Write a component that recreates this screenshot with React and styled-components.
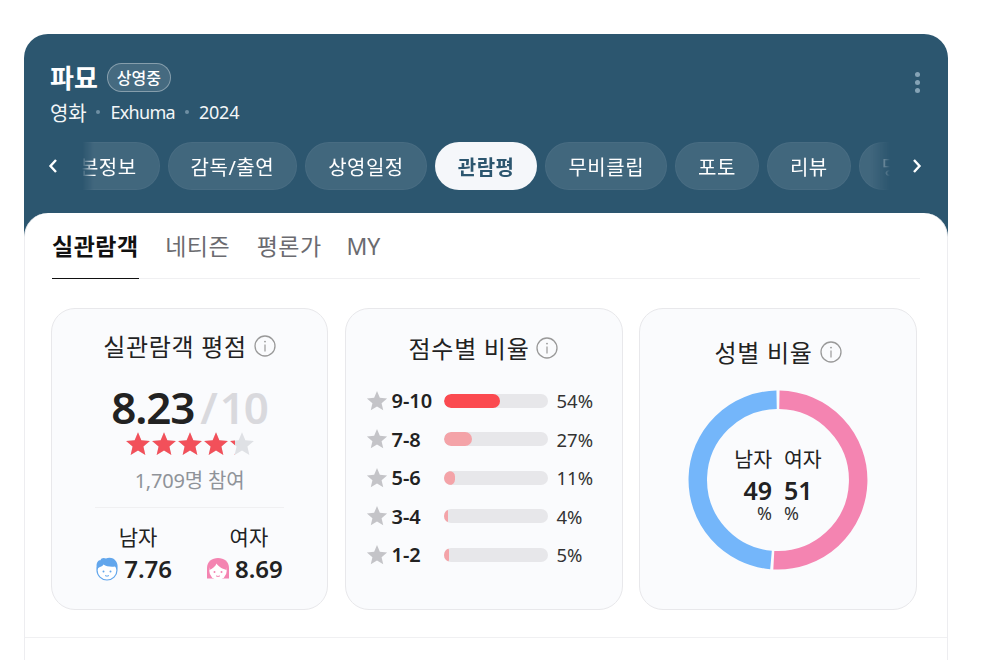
import React from 'react';
import styled, { createGlobalStyle } from 'styled-components';

const GlobalStyle = createGlobalStyle`
    html, body {
        margin: 0;
        padding: 0;
        background: #fff;
        height: 660px;
        overflow: hidden;
        font-family: "Noto Sans", "Noto Sans CJK KR", sans-serif;
        color: #222;
    }
`

const Page = styled.div`
    padding: 34px 42px 0 24px;
`

const Card = styled.div`
    border-radius: 24px 24px 0 0;
    background: #2c566f;
    overflow: hidden;
    height: 640px;
`

const Header = styled.header`
    padding: 26px 26px 0 26px;
    position: relative;
`

const TitleRow = styled.div`
    display: flex;
    align-items: center;
    gap: 9px;
    height: 34px;
`

const Title = styled.h1`
    margin: 0;
    font-size: 26px;
    font-weight: 700;
    color: #fff;
`

const Badge = styled.span`
    display: inline-flex;
    align-items: center;
    box-sizing: border-box;
    height: 29px;
    padding: 0 9px;
    border: 1px solid rgba(255,255,255,.35);
    border-radius: 15px;
    background: rgba(255,255,255,.12);
    font-size: 16px;
    font-weight: 500;
    color: #fff;
`

const SubRow = styled.div`
    display: flex;
    align-items: center;
    gap: 10px;
    margin-top: 2px;
    height: 32px;
    font-size: 18px;
    letter-spacing: -.2px;
    color: #f3f6f8;
`

const KindText = styled.span`
    font-size: 20px;
`

const TitleEn = styled.span`
    letter-spacing: -.7px;
`

const Dot = styled.i`
    width: 4px;
    height: 4px;
    border-radius: 50%;
    background: #6f8fa3;
`

const MoreDots = styled.button`
    position: absolute;
    top: 38px;
    right: 28px;
    display: flex;
    flex-direction: column;
    gap: 3px;
    padding: 0;
    border: 0;
    background: none;
    i {
        width: 5px;
        height: 5px;
        border-radius: 50%;
        background: #85a3b6;
    }
`

const TabRow = styled.div`
    display: flex;
    align-items: center;
    margin: 14px 0 0 -13px;
    height: 48px;
`

const Arrow = styled.button`
    flex: none;
    width: 32px;
    height: 32px;
    display: flex;
    align-items: center;
    justify-content: center;
    padding: 0;
    border: 0;
    background: none;
    color: #fff;
`

const Strip = styled.div`
    flex: none;
    width: 808px;
    margin: 0 11px 0 13px;
    overflow: hidden;
    -webkit-mask-image: linear-gradient(90deg, transparent 0, #000 12px, #000 788px, transparent 808px);
    mask-image: linear-gradient(90deg, transparent 0, #000 12px, #000 788px, transparent 808px);
`

const StripInner = styled.div`
    display: flex;
    gap: 8px;
    margin-left: -44px;
`

const Pill = styled.div`
    flex: none;
    box-sizing: border-box;
    height: 48px;
    padding: 0 22px;
    display: flex;
    align-items: center;
    border-radius: 24px;
    border: 1px solid ${p => p.$active ? 'transparent' : 'rgba(255,255,255,.04)'};
    background: ${p => p.$active ? '#f5f7fa' : 'rgba(255,255,255,.1)'};
    color: ${p => p.$active ? '#2c566f' : '#fff'};
    font-size: 20px;
    letter-spacing: .5px;
    font-weight: ${p => p.$active ? 700 : 400};
    white-space: nowrap;
`

const Body = styled.main`
    margin-top: 23px;
    background: #fff;
    border: 1px solid #ededf0;
    border-width: 0 1px;
    border-radius: 24px 24px 0 0;
    height: 460px;
    padding-left: 27px;
    padding-right: 27px;
`

const SubTabs = styled.nav`
    display: flex;
    gap: 26.5px;
    height: 65px;
    border-bottom: 1px solid #f0f0f2;
`

const SubTab = styled.div`
    box-sizing: border-box;
    height: 66px;
    padding-top: 16px;
    margin-left: ${p => p.$latin ? '-1.5px' : 0};
    font-size: 23px;
    letter-spacing: ${p => p.$latin ? '-.3px' : '.5px'};
    line-height: 34px;
    font-weight: ${p => p.$active ? 700 : 400};
    color: ${p => p.$active ? '#111' : '#6b6b70'};
    border-bottom: 1px solid ${p => p.$active ? '#111' : 'transparent'};
`

const Cards = styled.div`
    display: grid;
    grid-template-columns: 277px 278px 278px;
    column-gap: 16.5px;
    margin: 29px 0 0 -1px;
`

const Panel = styled.section`
    box-sizing: border-box;
    height: 302px;
    border: 1px solid #e8e8eb;
    border-radius: 24px;
    background: #fafbfd;
    padding-top: ${p => p.$top}px;
`

const PanelTitle = styled.h2`
    margin: 0;
    display: flex;
    justify-content: center;
    align-items: center;
    gap: 7px;
    height: 32px;
    font-size: 24px;
    letter-spacing: .7px;
    font-weight: 400;
    color: #222;
`

const InfoSvg = styled.svg`
    margin-top: 2px;
`

const Score = styled.div`
    display: flex;
    justify-content: center;
    align-items: baseline;
    margin-top: 21px;
    height: 49px;
    line-height: 50px;
    font-size: 44px;
    font-weight: 600;
    letter-spacing: -1.2px;
`

const ScoreMax = styled.span`
    color: #d9d9dd;
    margin-left: 6px;
    word-spacing: -7px;
`

const Stars = styled.div`
    position: relative;
    width: 130px;
    height: 26px;
    margin: 0 auto;
`

const StarLayer = styled.div`
    position: absolute;
    left: 0;
    top: 0;
    display: flex;
    overflow: hidden;
    color: ${p => p.$color};
`

const Count = styled.div`
    text-align: center;
    margin-top: 10px;
    font-size: 20px;
    letter-spacing: -.2px;
    line-height: 28px;
    color: #8f9399;
`

const Divider = styled.div`
    height: 1px;
    margin: 12px 43px 0;
    background: #f0f0f2;
`

const Genders = styled.div`
    display: flex;
    justify-content: center;
    gap: 35px;
    margin-top: 14px;
`

const Gender = styled.div`
    display: flex;
    flex-direction: column;
    align-items: center;
`

const GenderLabel = styled.span`
    margin-left: 8px;
    font-size: 21px;
    line-height: 30px;
`

const GenderScore = styled.div`
    display: flex;
    align-items: center;
    gap: 6px;
    margin-top: 1px;
    font-size: 24px;
    line-height: 32px;
    font-weight: 600;
`

const Rows = styled.div`
    display: flex;
    flex-direction: column;
    gap: 12.5px;
    margin: 24.5px 0 0 20px;
`

const Row = styled.div`
    display: flex;
    align-items: center;
    height: 26px;
`

const RowStar = styled.span`
    display: flex;
    color: #c4c4c8;
`

const RowLabel = styled.span`
    width: 52px;
    margin-left: 4px;
    font-size: 20px;
    font-weight: 600;
`

const Track = styled.div`
    width: 104px;
    height: 14px;
    border-radius: 7px;
    background: #e7e7ea;
    overflow: hidden;
`

const Fill = styled.div`
    height: 100%;
    border-radius: 7px;
    background: ${p => p.$top ? '#fb4a50' : '#f4a3a8'};
`

const Pct = styled.span`
    margin-left: 9px;
    font-size: 18.5px;
    color: #333;
`

const DonutBox = styled.div`
    position: relative;
    width: 180px;
    height: 180px;
    margin: 22.5px auto 0;
`

const DonutText = styled.div`
    position: absolute;
    left: 0;
    right: 0;
    top: 55.5px;
    display: flex;
    justify-content: center;
    gap: 12px;
`

const DonutCol = styled.div`
    display: flex;
    flex-direction: column;
    align-items: ${p => p.$side};
    font-size: 20.5px;
    line-height: 28px;
    white-space: nowrap;
`

const DonutValue = styled.b`
    font-size: 25px;
    font-weight: 600;
    line-height: 30px;
    margin-top: 2px;
`

const DonutUnit = styled.span`
    font-size: 18px;
    line-height: 16px;
    color: #333;
`

const BottomLine = styled.div`
    height: 1px;
    margin: 27px -27px 0;
    background: #f0f0f2;
`

const InfoIcon = () => (
    <InfoSvg width="22" height="22" viewBox="0 0 22 22" fill="none">
        <circle cx="11" cy="11" r="10" stroke="#999" strokeWidth="1.3" />
        <circle cx="11" cy="6.6" r="0.9" fill="#999" />
        <path d="M11 9.5V16.5" stroke="#999" strokeWidth="1.2" />
    </InfoSvg>
)

const Star = ({ size = 26 }) => (
    <svg width={size} height={size} viewBox="0 0 24 24" fill="currentColor" style={{ flex: 'none' }}>
        <path d="M12 1.2l3.1 7.3 7.9.7-6 5.2 1.8 7.7L12 18.1l-6.8 4 1.8-7.7-6-5.2 7.9-.7z" />
    </svg>
)

const BoyFace = () => (
    <svg width="22" height="24" viewBox="0 0 22 24">
        <circle cx="11" cy="13" r="10" fill="#fff" stroke="#62a6ec" strokeWidth="1.2" />
        <path d="M1 13C-.5 6 2 3 4.500 3.200 5 1 8 .3 10 1.600 13 0 18 .8 20 4.200 21.800 6.500 22 10 21 13 20.500 11.500 20 10.500 19 9.500 15 10 10 9.500 7.500 7.500 6.500 9.500 4 9.500 3 10.500 2 11 1.500 12 1 13z" fill="#62a6ec" />
        <circle cx="7.500" cy="14.500" r="1" fill="#62a6ec" />
        <circle cx="14.500" cy="14.500" r="1" fill="#62a6ec" />
        <path d="M9 18.500c1.200.8 2.800.8 4 0" stroke="#62a6ec" strokeWidth="1" fill="none" />
    </svg>
)

const GirlFace = () => (
    <svg width="22" height="24" viewBox="0 0 22 24">
        <path d="M0 21.500V11C0 4.500 5 1 11 1s11 3.500 11 10v10.500z" fill="#f484b1" />
        <circle cx="11" cy="14" r="8.700" fill="#fff" />
        <path d="M2.500 13C5 12 8.500 9.500 9.500 6.500 11.500 10 16 12 19.500 13L20 7 11 3 3 6z" fill="#f484b1" />
        <circle cx="7.500" cy="15" r="1" fill="#f484b1" />
        <circle cx="14.500" cy="15" r="1" fill="#f484b1" />
        <path d="M9 18.800c1.200.8 2.800.8 4 0" stroke="#f484b1" strokeWidth="1" fill="none" />
    </svg>
)

const polar = (deg, r) => {
    const a = (deg - 90) * Math.PI / 180
    return `${(90 + r * Math.cos(a)).toFixed(2)} ${(90 + r * Math.sin(a)).toFixed(2)}`
}

const arc = (from, to, r) => `M${polar(from, r)} A${r} ${r} 0 ${to - from > 180 ? 1 : 0} 1 ${polar(to, r)}`

const tabs = ['기본정보', '감독/출연', '상영일정', '관람평', '무비클립', '포토', '리뷰', '명대사']
const scoreRows = [
    ['9-10', 54],
    ['7-8', 27],
    ['5-6', 11],
    ['3-4', 4],
    ['1-2', 5],
]
const fiveStars = [0, 1, 2, 3, 4]

export default function App() {
    return (
        <Page>
            <GlobalStyle />
            <Card>
                <Header>
                    <TitleRow>
                        <Title>파묘</Title>
                        <Badge>상영중</Badge>
                    </TitleRow>
                    <SubRow>
                        <KindText>영화</KindText><Dot /><TitleEn>Exhuma</TitleEn><Dot /><span>2024</span>
                    </SubRow>
                    <MoreDots><i /><i /><i /></MoreDots>
                    <TabRow>
                        <Arrow>
                            <svg width="12" height="16" viewBox="0 0 12 16" fill="none"><path d="M9 2 3.500 8 9 14" stroke="#fff" strokeWidth="2.400" /></svg>
                        </Arrow>
                        <Strip>
                            <StripInner>
                                {tabs.map(t => <Pill key={t} $active={t === '관람평'}>{t}</Pill>)}
                            </StripInner>
                        </Strip>
                        <Arrow>
                            <svg width="12" height="16" viewBox="0 0 12 16" fill="none"><path d="M3 2 8.500 8 3 14" stroke="#fff" strokeWidth="2.400" /></svg>
                        </Arrow>
                    </TabRow>
                </Header>
                <Body>
                    <SubTabs>
                        <SubTab $active>실관람객</SubTab>
                        <SubTab>네티즌</SubTab>
                        <SubTab>평론가</SubTab>
                        <SubTab $latin>MY</SubTab>
                    </SubTabs>
                    <Cards>
                        <Panel $top={20}>
                            <PanelTitle>실관람객 평점 <InfoIcon /></PanelTitle>
                            <Score>8.23<ScoreMax>/ 10</ScoreMax></Score>
                            <Stars>
                                <StarLayer $color="#dfe1e5">{fiveStars.map(i => <Star key={i} />)}</StarLayer>
                                <StarLayer $color="#f2505a" style={{ width: `${8.23 * 10 + 3}%` }}>{fiveStars.map(i => <Star key={i} />)}</StarLayer>
                            </Stars>
                            <Count>1,709명 참여</Count>
                            <Divider />
                            <Genders>
                                <Gender><GenderLabel>남자</GenderLabel><GenderScore><BoyFace />7.76</GenderScore></Gender>
                                <Gender><GenderLabel>여자</GenderLabel><GenderScore><GirlFace />8.69</GenderScore></Gender>
                            </Genders>
                        </Panel>
                        <Panel $top={22}>
                            <PanelTitle>점수별 비율 <InfoIcon /></PanelTitle>
                            <Rows>
                                {scoreRows.map(([label, value], i) => (
                                    <Row key={label}>
                                        <RowStar><Star size={22} /></RowStar>
                                        <RowLabel>{label}</RowLabel>
                                        <Track><Fill $top={i === 0} style={{ width: `${value}%` }} /></Track>
                                        <Pct>{value}%</Pct>
                                    </Row>
                                ))}
                            </Rows>
                        </Panel>
                        <Panel $top={26}>
                            <PanelTitle>성별 비율 <InfoIcon /></PanelTitle>
                            <DonutBox>
                                <svg width="180" height="180" viewBox="0 0 180 180" fill="none">
                                    <path d={arc(1, 183, 80.25)} stroke="#f484b1" strokeWidth="18.500" />
                                    <path d={arc(185, 359, 80.25)} stroke="#74b6fa" strokeWidth="18.500" />
                                </svg>
                                <DonutText>
                                    <DonutCol $side="flex-end">남자<DonutValue>49</DonutValue><DonutUnit>%</DonutUnit></DonutCol>
                                    <DonutCol $side="flex-start">여자<DonutValue>51</DonutValue><DonutUnit>%</DonutUnit></DonutCol>
                                </DonutText>
                            </DonutBox>
                        </Panel>
                    </Cards>
                    <BottomLine />
                </Body>
            </Card>
        </Page>
    )
}
